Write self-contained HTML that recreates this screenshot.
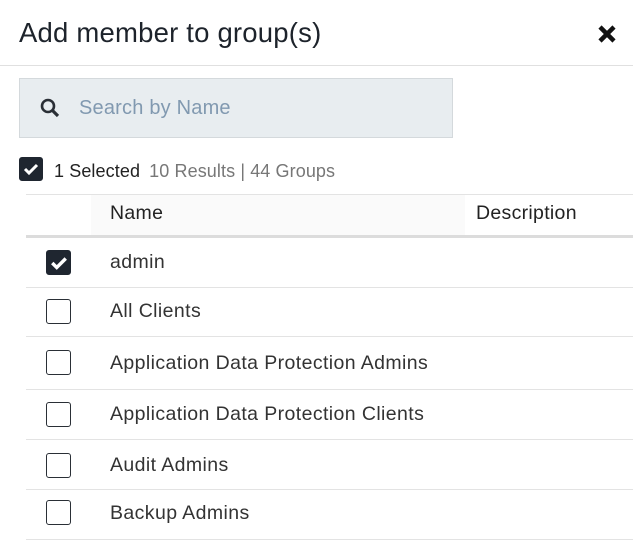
<!DOCTYPE html>
<html><head><style>
body{margin:0;width:633px;height:558px;background:#fff;font-family:"Liberation Sans",sans-serif;color:#222;position:relative;overflow:hidden}
.a{position:absolute}
.cb{position:absolute;width:25px;height:25px;border:1.5px solid #2a2f36;border-radius:3px;box-sizing:border-box;background:#fff}
.cb.on{background:#1f2630;border-color:#1f2630}
.cb.on svg{position:absolute;left:3px;top:4px}
.row{position:absolute;left:26px;width:607px;border-bottom:1px solid #e3e3e3}
.row span{position:absolute;left:84px;font-size:19.5px;letter-spacing:0.4px;color:#333}
</style></head><body>
<div class="a" style="left:19px;top:17px;font-size:27.5px;letter-spacing:0.2px;color:#1d232b">Add member to group(s)</div>
<svg class="a" style="left:597px;top:24px" width="20" height="20" viewBox="0 0 20 20"><path d="M3 3L17 17M17 3L3 17" stroke="#111" stroke-width="4.5"/></svg>
<div class="a" style="left:0;top:65px;width:633px;height:1px;background:#e0e0e0"></div>
<div class="a" style="left:19px;top:78px;width:432px;height:58px;background:#e8edf0;border:1px solid #d4d9dc"></div>
<svg class="a" style="left:39px;top:97px" width="22" height="22" viewBox="0 0 22 22"><circle cx="9" cy="9" r="6" fill="none" stroke="#2a2f36" stroke-width="2.6"/><path d="M13.5 13.5L19 19" stroke="#2a2f36" stroke-width="3.2"/></svg>
<div class="a" style="left:79px;top:97px;font-size:20px;letter-spacing:0.2px;color:#8199b0">Search by Name</div>
<div class="cb on" style="left:19px;top:157px;width:24px;height:24px"><svg width="16" height="14" viewBox="0 0 16 14"><path d="M2 7L6 11L14 3" fill="none" stroke="#fff" stroke-width="3"/></svg></div>
<div class="a" style="left:54px;top:161px;font-size:18px;letter-spacing:0.1px;color:#222">1 Selected <span style="color:#777;margin-left:4px">10 Results | 44 Groups</span></div>
<div class="a" style="left:26px;top:194px;width:607px;height:1px;background:#e3e3e3"></div>
<div class="a" style="left:91px;top:195px;width:374px;height:40px;background:#fafafa"></div>
<div class="a" style="left:110px;top:202px;font-size:19.5px;letter-spacing:0.3px;color:#222">Name</div>
<div class="a" style="left:476px;top:202px;font-size:19.5px;letter-spacing:0.3px;color:#222">Description</div>
<div class="a" style="left:26px;top:235px;width:607px;height:3px;background:#dcdcdc"></div>
<div class="row" style="top:238px;height:49px"><div class="cb on" style="left:20px;top:12px"><svg width="18" height="16" viewBox="0 0 16 14"><path d="M2 7L6 11L14 3" fill="none" stroke="#fff" stroke-width="3"/></svg></div><span style="top:13px">admin</span></div>
<div class="row" style="top:288px;height:48px"><div class="cb" style="left:20px;top:11px"></div><span style="top:12px">All Clients</span></div>
<div class="row" style="top:337px;height:52px"><div class="cb" style="left:20px;top:13px"></div><span style="top:15px">Application Data Protection Admins</span></div>
<div class="row" style="top:390px;height:49px"><div class="cb" style="left:20px;top:12px"></div><span style="top:13px">Application Data Protection Clients</span></div>
<div class="row" style="top:440px;height:49px"><div class="cb" style="left:20px;top:13px"></div><span style="top:14px">Audit Admins</span></div>
<div class="row" style="top:490px;height:49px"><div class="cb" style="left:20px;top:10px"></div><span style="top:12px">Backup Admins</span></div>
</body></html>
